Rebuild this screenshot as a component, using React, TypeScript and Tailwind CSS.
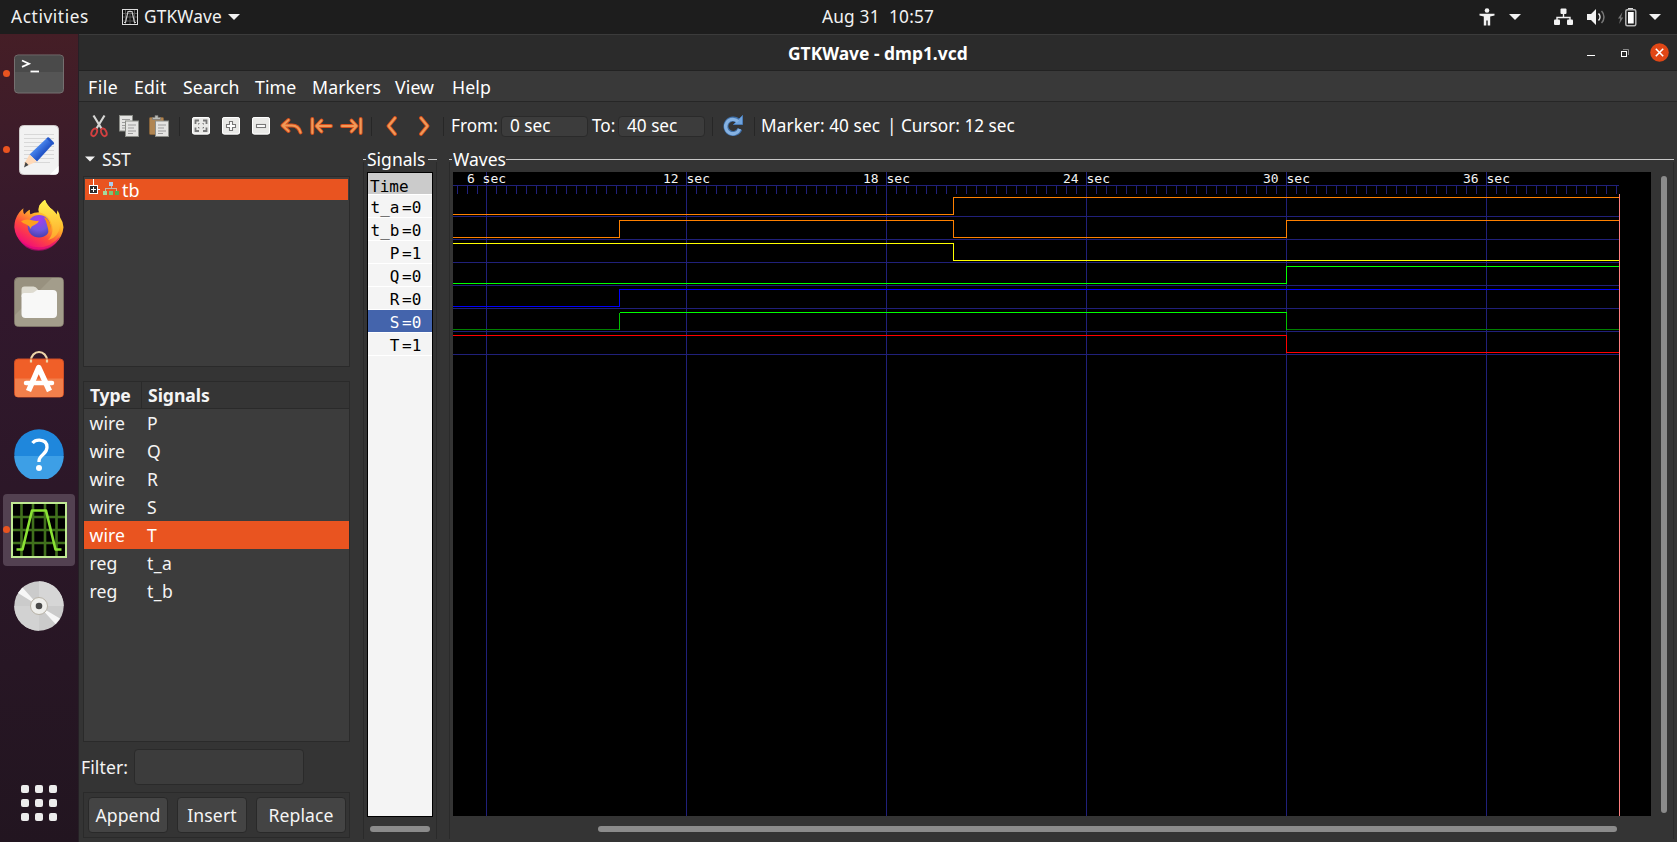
import React from "react";

const ui = "font-['Noto_Sans',sans-serif]";

/* ---------- top bar ---------- */

function Caret({ className = "" }: { className?: string }) {
  return (
    <svg width="12" height="6" viewBox="0 0 12 6" className={className}>
      <path d="M0 0h12L6 6z" fill="#f2f2f2" />
    </svg>
  );
}

function TopBar() {
  return (
    <header className="relative flex h-[34px] shrink-0 items-center bg-[#1d1d1d] text-[17.3px] leading-[34px] text-[#f2f2f2]">
      <div className="w-[122px] pl-[11px] tracking-[0.6px]">Activities</div>
      <svg width="16" height="16" viewBox="0 0 16 16" className="mr-[6px]">
        <rect x=".5" y=".5" width="15" height="15" fill="#111" stroke="#ddd" />
        <path d="M3.500 1v14M8 1v14M12.500 1v14M1 4.500h14M1 8h14M1 12h14" stroke="#555" />
        <path d="M2 13.500h1.500L6 2.500h4l2.500 11H14" fill="none" stroke="#ccc" strokeWidth="1.200" />
      </svg>
      <div className="w-[84px] tracking-[0.15px]">GTKWave</div>
      <Caret />
      <div className="absolute left-[822px] whitespace-pre tracking-[0.18px]">Aug 31  10:57</div>
      <div className="ml-auto flex items-center pr-[16px]">
        <svg width="16" height="18" viewBox="0 0 16 18" className="mr-[14px]" fill="#f2f2f2">
          <circle cx="8" cy="2.500" r="2.300" />
          <path d="M.5 5.800h15v1.700l-4.300 1V17.500H8.700V12.500H7.300v5H4.800V8.500L.5 7.500z" />
        </svg>
        <Caret className="mr-[33px]" />
        <svg width="19" height="18" viewBox="0 0 19 18" className="mr-[14px]">
          <path d="M9.500 5v4.500M3 12.500V9.500h13v3" fill="none" stroke="#f2f2f2" strokeWidth="1.400" />
          <rect x="6.500" y=".5" width="6" height="5.500" rx="1" fill="#f2f2f2" />
          <rect x="0" y="11.500" width="6" height="5.500" rx="1" fill="#f2f2f2" />
          <rect x="13" y="11.500" width="6" height="5.500" rx="1" fill="#f2f2f2" />
        </svg>
        <svg width="19" height="18" viewBox="0 0 19 18" className="mr-[12px]">
          <path d="M0 6h4l5-5v16l-5-5H0z" fill="#f2f2f2" />
          <path d="M11.500 5.500a5 5 0 0 1 0 7" fill="none" stroke="#f2f2f2" strokeWidth="1.500" />
          <path d="M14.500 3a8.500 8.500 0 0 1 0 12" fill="none" stroke="#777" strokeWidth="1.500" />
        </svg>
        <svg width="19" height="20" viewBox="0 0 19 20" className="mr-[12px]">
          <path d="M4.500 5L0 11.500h2.200L1.200 17l4-6.500H3z" fill="#777" />
          <path d="M10 1h5v2h-5z" fill="#ddd" />
          <rect x="7.800" y="2.700" width="10" height="16" rx="1.500" fill="#1d1d1d" stroke="#b5b5b5" strokeWidth="1.500" />
          <rect x="10" y="5" width="5.700" height="11.500" fill="#fff" />
        </svg>
        <Caret />
      </div>
    </header>
  );
}

/* ---------- dock ---------- */

function DockItem({ running, active, children }: { running?: boolean; active?: boolean; children: React.ReactNode }) {
  return (
    <div className="relative flex h-[72px] w-[72px] items-center justify-center">
      {active && <div className="absolute inset-0 rounded-[4px] bg-[#534151]" />}
      {running && <div className="absolute top-[32px] left-0 h-[7px] w-[7px] rounded-full bg-[#e95420]" />}
      <div className="relative">{children}</div>
    </div>
  );
}

function TerminalIcon() {
  return (
    <svg width="50" height="50" viewBox="0 0 50 50">
      <rect x=".5" y="6" width="49" height="38" rx="3.500" fill="#555" stroke="#757070" />
      <path d="M1 23V9.500Q1 6.500 4 6.500H46Q49 6.500 49 9.500V23z" fill="#4a4a4a" />
      <path d="M8 11.500l7 3.200-7 3.200" fill="none" stroke="#fff" strokeWidth="1.800" />
      <path d="M16.500 22.500h8.500" stroke="#fff" strokeWidth="1.800" />
    </svg>
  );
}

function EditorIcon() {
  return (
    <svg width="50" height="50" viewBox="0 0 50 50">
      <defs>
        <linearGradient id="pen" x1="0" y1="0" x2="1" y2="1">
          <stop offset=".35" stopColor="#4a86ee" />
          <stop offset=".6" stopColor="#2456c8" />
        </linearGradient>
      </defs>
      <rect x="5.500" y=".5" width="39" height="49" rx="4" fill="#f2f2f2" stroke="#cfcaca" />
      <path d="M10 9.500h30M10 13.500h30M10 17.500h30M10 21.500h30M10 25.500h30M10 29.500h30M10 33.500h30M10 37.500h26" stroke="#d8d8d8" />
      <path d="M33 13l6 6-16 17.500-7.500-7z" fill="url(#pen)" />
      <path d="M32.500 13.500q1.500-2 3-.5l4 4q1.500 1.500-.5 3z" fill="#2456c8" />
      <path d="M15.500 29.500l7.500 7L12.500 41 10 39z" fill="#ffd9b8" />
      <path d="M11.500 37l3 3L10 42.500z" fill="#444" />
      <path d="M36 49.500l8.500-8.500v5q0 3.500-3.500 3.500z" fill="#fff" />
    </svg>
  );
}

function FirefoxIcon() {
  return (
    <svg width="50" height="52" viewBox="0 0.7 50 52">
      <defs>
        <linearGradient id="fxBody" x1=".85" y1=".1" x2=".3" y2="1">
          <stop offset="0" stopColor="#fff44f" />
          <stop offset=".35" stopColor="#ffb528" />
          <stop offset=".65" stopColor="#ff4a3d" />
          <stop offset="1" stopColor="#f0057f" />
        </linearGradient>
        <radialGradient id="fxGlobe" cx=".5" cy=".2" r=".8">
          <stop offset="0" stopColor="#a63cf0" />
          <stop offset=".6" stopColor="#6f56dd" />
          <stop offset="1" stopColor="#4a3fae" />
        </radialGradient>
        <linearGradient id="fxTail" x1="0" y1="0" x2="0" y2="1">
          <stop offset="0" stopColor="#fff44f" />
          <stop offset="1" stopColor="#ffa52b" />
        </linearGradient>
      </defs>
      <path d="M9.500 9q-1 4 1 6 3-4 5.500-4.500-.5 3 .5 4.500Q20 13 25 13q-2-7 6-12.500 2 6 7.500 10 3 2.500 4 5l1-4.500q2 3 2.500 7 3.500 5 3.500 10A24.700 24.700 0 0 1 .3 28Q.3 20 5 13.500 7 10.500 9.500 9z" fill="url(#fxBody)" />
      <path d="M4 38q8 10 21 10 12 0 21-11-6 14-21 14.500Q11 52 4 38z" fill="#d9067f" opacity=".6" />
      <path d="M25 13q-2-7 6-12.500 2 6 7.500 10Q46 17 46 26q-1 12-12 15 6-6 4-15-2-8-8-11-2-1.500-5-2z" fill="url(#fxTail)" />
      <circle cx="25" cy="27" r="11.300" fill="url(#fxGlobe)" />
      <path d="M7 22q4-2.500 9-1.500 4 1.500 9 1-1 3-4.500 4.200-3.500 1-4 4-.5-3-3.500-4.200Q9 24.500 7 22z" fill="#ffa01e" />
      <path d="M30 18q5 1.500 6.500 8 .5 5-2 8.500 0-5-1.500-9-1-4-3-7.500z" fill="#ff8a16" />
    </svg>
  );
}

function FilesIcon() {
  return (
    <svg width="50" height="50" viewBox="0 0 50 50">
      <rect x=".5" y=".5" width="49" height="49" rx="4" fill="#98917f" stroke="#7d7468" />
      <path d="M38 1h8q3 0 3 3v42q0 3-3 3H4q-3 0-3-3v-8z" fill="#a39d8b" />
      <path d="M7.500 16v-3.500q0-3 3-3h9q2.500 0 4 2.500l1.500 2V20H7.500z" fill="#dedbd0" />
      <path d="M7.500 19q0-3 3-3h6q3 0 4.500-1.500l2-1.500H39q4 0 4 4v20q0 4-4 4H11.500q-4 0-4-4z" fill="#f8f8f7" />
    </svg>
  );
}

function SoftwareIcon() {
  return (
    <svg width="50" height="50" viewBox="0 2.500 50 50" className="overflow-visible">
      <path d="M17 11.500V9a8 8.500 0 0 1 16 0v2.500" fill="none" stroke="#eed5a9" strokeWidth="2.200" transform="translate(0 1)" />
      <rect x=".5" y="8.500" width="49" height="38" rx="3.500" fill="#f05f28" stroke="#cf4f26" />
      <path d="M1 28h48v15.500q0 3-3 3H4q-3 0-3-3z" fill="#f27f4b" />
      <path d="M17 12V9M33 12V9" stroke="#eed5a9" strokeWidth="2.200" />
      <g transform="translate(0 .5)">
        <path d="M14.500 40L24.700 16.500l10.800 23.500" fill="none" stroke="#fff" strokeWidth="5.500" strokeLinejoin="round" />
        <path d="M12 32h26" stroke="#fff" strokeWidth="4.500" strokeLinecap="round" />
      </g>
    </svg>
  );
}

function HelpIcon() {
  return (
    <svg width="50" height="50" viewBox="0 0 50 50">
      <circle cx="25" cy="25" r="24.700" fill="#1f87dc" />
      <path d="M.3 27A24.700 24.700 0 0 0 49.700 27z" fill="#3d9fe6" />
      <path d="M18.500 14q2.500-3 7-2.800 7.500.3 7.500 7 0 3.800-4 7.300-4 3.500-4 6.500v1" fill="none" stroke="#fff" strokeWidth="3.300" />
      <circle cx="25" cy="39" r="3" fill="#fff" />
    </svg>
  );
}

function GtkWaveIcon() {
  return (
    <svg width="56" height="56" viewBox="0 0 56 56">
      <rect x="1" y="1" width="54" height="54" fill="#000" />
      <path d="M10.500 2v52M22 2v52M34 2v52M45.500 2v52M2 15h52M2 28h52M2 41h52" stroke="#40701c" strokeWidth="2.600" />
      <rect x="1" y="1" width="54" height="54" fill="none" stroke="#c0ea94" strokeWidth="2" />
      <path d="M5.500 47.500h6L21 8.500h14l9.500 39h6" fill="none" stroke="#8ae234" strokeWidth="2.600" strokeLinejoin="round" />
    </svg>
  );
}

function DiscIcon() {
  return (
    <svg width="50" height="50" viewBox="0 0 50 50">
      <circle cx="25" cy="25" r="24.700" fill="#cbcbcb" />
      <path d="M25 25V.3A24.700 24.700 0 0 1 49.700 25z" fill="#d6d6d6" />
      <path d="M25 25V49.700A24.700 24.700 0 0 1 .3 25z" fill="#d2d2d2" />
      <path d="M25 25L4 12l4.500-5.500zM25 25l21 12.500-4.500 5.500z" fill="#f7f7f7" />
      <circle cx="25" cy="25" r="8.500" fill="#efefec" stroke="#b8b2a6" />
      <circle cx="25" cy="25" r="3.300" fill="#4a4a4a" />
    </svg>
  );
}

function Dock() {
  return (
    <nav className="flex w-[79px] shrink-0 flex-col gap-[4px] border-r border-[#262026] bg-linear-to-b from-[#451e26] via-[#32182d] via-30% to-[#221520] pt-[4px] pl-[3px]">
      <DockItem running><TerminalIcon /></DockItem>
      <DockItem running><EditorIcon /></DockItem>
      <DockItem><FirefoxIcon /></DockItem>
      <DockItem><FilesIcon /></DockItem>
      <DockItem><SoftwareIcon /></DockItem>
      <DockItem><HelpIcon /></DockItem>
      <DockItem running active><GtkWaveIcon /></DockItem>
      <DockItem><DiscIcon /></DockItem>
      <div className="mt-auto mb-[21px] ml-[18px] grid w-[36px] grid-cols-3 gap-[6px]">
        {Array.from({ length: 9 }, (_, i) => (
          <div key={i} className="h-[8px] w-[8px] rounded-[2px] bg-[#ececec]" />
        ))}
      </div>
    </nav>
  );
}

/* ---------- window chrome ---------- */

function TitleBar() {
  return (
    <div className="relative flex h-[37px] shrink-0 items-center border-t border-b border-t-[#3b3b3b] border-b-[#222] bg-[#2b2b2b]">
      <div className="absolute left-[709px] text-[17.4px] leading-[34px] font-bold whitespace-nowrap text-white">GTKWave - dmp1.vcd</div>
      <div className="ml-auto flex items-center pr-[8px]">
        <svg width="8" height="10" viewBox="0 0 8 10" className="mr-[26px]">
          <path d="M0 7.500h8" stroke="#fff" />
        </svg>
        <svg width="8" height="8" viewBox="0 0 8 8" className="mr-[21px]">
          <path d="M2 .5h5.500V6" fill="none" stroke="#8a8a8a" />
          <rect x=".5" y="2.500" width="5" height="5" fill="none" stroke="#fff" />
        </svg>
        <svg width="19" height="19" viewBox="0 0 19 19">
          <circle cx="9.500" cy="9.500" r="9.300" fill="#e04716" />
          <path d="M5.800 5.800l7.400 7.400M13.200 5.800l-7.400 7.400" stroke="#fff" strokeWidth="1.600" />
        </svg>
      </div>
    </div>
  );
}

function MenuBar() {
  return (
    <div className="grid h-[31px] shrink-0 grid-cols-[46px_49px_72px_57px_83px_57px_60px] border-b border-[#262626] bg-[#393939] pt-[2px] pl-[9px] text-[17.7px] leading-[28px] text-white">
      {["File", "Edit", "Search", "Time", "Markers", "View", "Help"].map((m) => (
        <div key={m} className={m === "File" ? "tracking-[0.5px]" : m === "Edit" ? "tracking-[0.2px]" : "tracking-[0.1px]"}>
          {m}
        </div>
      ))}
    </div>
  );
}

function Cell({ children, className = "" }: { children: React.ReactNode; className?: string }) {
  return <div className={`flex w-[30px] shrink-0 items-center justify-center ${className}`}>{children}</div>;
}

function Sep({ className }: { className: string }) {
  return <div className={`h-[19px] w-px shrink-0 bg-[#262626] ${className}`} />;
}

function WhiteTile({ children }: { children: React.ReactNode }) {
  return (
    <svg width="20" height="20" viewBox="0 0 20 20">
      <rect x="1" y="2" width="18" height="17.500" rx="3" fill="#1d1d1d" opacity=".5" />
      <rect x="1" y="1" width="18" height="17.500" rx="2.500" fill="#e9e9e7" />
      <rect x="1.500" y="1.500" width="17" height="16.500" rx="2" fill="none" stroke="#fff" />
      {children}
    </svg>
  );
}

function Page({ x, y }: { x: number; y: number }) {
  return (
    <g transform={`translate(${x} ${y})`}>
      <rect x=".5" y=".5" width="13" height="15.500" fill="#e4e4e2" stroke="#8b8d88" />
      <path d="M3 4.500h8M3 7.500h6M3 10.500h8M3 13h5" stroke="#9c9c9c" />
    </g>
  );
}

function OrangeArrow({ d, flip }: { d: string; flip?: boolean }) {
  return (
    <svg width="23" height="20" viewBox="0 0 23 20" className={flip ? "-scale-x-100" : ""}>
      <path d={d} fill="none" stroke="#d9501c" strokeWidth="3.800" strokeLinejoin="round" strokeLinecap="round" />
      <path d={d} fill="none" stroke="#f09a58" strokeWidth="2" strokeLinejoin="round" strokeLinecap="round" />
    </svg>
  );
}

const LINE_ARROW = "M2.300 3v14M21 10H7M11.500 4.500L6.500 10l5 5.500";

function Entry({ value, className }: { value: string; className: string }) {
  return (
    <div className={`h-[21px] shrink-0 rounded-[4px] border border-[#2a2a2a] bg-[#3c3c3c] pl-[8px] leading-[18px] ${className}`}>{value}</div>
  );
}

function ToolBar() {
  return (
    <div className="flex h-[48px] shrink-0 items-center pl-[5px] text-[17.2px] leading-[20px] whitespace-nowrap text-white">
      <Cell>
        <svg width="18" height="24" viewBox="0 0 18 24">
          <path d="M3.500 1.500l8 13M14.500 1.500l-8 13" stroke="#d6d6d4" strokeWidth="2.200" />
          <ellipse cx="4.200" cy="18.300" rx="2.500" ry="4" transform="rotate(25 4.200 18.300)" fill="none" stroke="#d24040" strokeWidth="1.900" />
          <ellipse cx="13.800" cy="18.300" rx="2.500" ry="4" transform="rotate(-25 13.800 18.300)" fill="none" stroke="#d24040" strokeWidth="1.900" />
        </svg>
      </Cell>
      <Cell>
        <svg width="21" height="23" viewBox="0 0 21 23"><Page x={0} y={0} /><Page x={6} y={5.5} /></svg>
      </Cell>
      <Cell>
        <svg width="21" height="23" viewBox="0 0 21 23">
          <rect x=".5" y="2.500" width="14" height="17" rx="1" fill="#b08552" stroke="#86633a" />
          <path d="M3.500 4.500V2.500h2.500V.5h3v2h2.500v2z" fill="#b9bbb6" stroke="#777" strokeWidth=".7" />
          <Page x={6} y={5.5} />
        </svg>
      </Cell>
      <Sep className="ml-[5px] mr-[6px]" />
      <Cell>
        <WhiteTile>
          <path d="M4.500 8V4.500H8M12 4.500h3.500V8M15.500 11.500V15H12M8 15H4.500v-3.500" fill="none" stroke="#777" strokeWidth="1.800" />
          <path d="M7.500 8.500v-1h1M11.500 7.500h1v1M12.500 11v1h-1M8.500 12h-1v-1" fill="none" stroke="#777" />
        </WhiteTile>
      </Cell>
      <Cell>
        <WhiteTile>
          <path d="M8.500 5.500h3v3h3v3h-3v3h-3v-3h-3v-3h3z" fill="#fff" stroke="#777" strokeWidth="1.100" />
        </WhiteTile>
      </Cell>
      <Cell>
        <WhiteTile>
          <rect x="5.500" y="8.500" width="9" height="3" fill="#fff" stroke="#777" strokeWidth="1.100" />
        </WhiteTile>
      </Cell>
      <Cell><OrangeArrow d="M8.500 4L2.500 9.500l6 5.500M3.500 9.500H12q6.500 0 8.500 7" /></Cell>
      <Cell><OrangeArrow d={LINE_ARROW} /></Cell>
      <Cell><OrangeArrow d={LINE_ARROW} flip /></Cell>
      <Sep className="mr-[4px] ml-[5px]" />
      <Cell><OrangeArrow d="M15 2L8.500 10l6.500 8" /></Cell>
      <Cell className="ml-[3px]"><OrangeArrow d="M15 2L8.500 10l6.500 8" flip /></Cell>
      <Sep className="ml-[4px] mr-[7px]" />
      <div className="w-[50px] shrink-0">From:</div>
      <Entry value="0 sec" className="w-[87px]" />
      <div className="w-[30px] shrink-0 pl-[4px]">To:</div>
      <Entry value="40 sec" className="w-[87px]" />
      <Sep className="ml-[7px] mr-[10px]" />
      <svg width="21" height="22" viewBox="0 0 21 22" className="shrink-0">
        <path d="M15.500 6.500A7.200 7.200 0 1 0 16.800 14" fill="none" stroke="#3f6fa8" strokeWidth="5" />
        <path d="M10.500 9.500h9V.5z" fill="#6fa3dc" stroke="#4b7db8" />
        <path d="M15 6.500A7.200 7.200 0 1 0 16.600 14" fill="none" stroke="#86b2e2" strokeWidth="3.300" />
      </svg>
      <Sep className="ml-[10px] mr-[6px]" />
      <div className="w-[126px] shrink-0 tracking-[0.1px]">Marker: 40 sec</div>
      <div className="w-[14px] shrink-0">|</div>
      <div>Cursor: 12 sec</div>
    </div>
  );
}

/* ---------- left pane ---------- */

const NETS = [
  ["wire", "P"],
  ["wire", "Q"],
  ["wire", "R"],
  ["wire", "S"],
  ["wire", "T"],
  ["reg", "t_a"],
  ["reg", "t_b"],
];

function Button({ label, className }: { label: string; className: string }) {
  return (
    <div className={`flex h-[36px] items-center justify-center rounded-[4px] border border-[#292929] bg-[#444] tracking-[0.1px] ${className}`}>{label}</div>
  );
}

function LeftPane() {
  return (
    <aside className="flex w-[284px] shrink-0 flex-col pl-[3px] text-[17.6px] text-[#f4f4f4]">
      <div className="mb-[7px] flex h-[20px] items-center pl-[3px]">
        <Caret className="mr-[7px] w-[10px]" />
        <span className="tracking-[-0.1px] leading-[20px]">SST</span>
      </div>
      <div className="ml-px h-[191px] w-[267px] border border-[#2a2a2a] bg-[#3c3c3c] px-px pt-[2px]">
        <div className="flex h-[21px] items-center bg-[#e95420] text-white">
          <svg width="36" height="21" viewBox="0 0 36 21" shapeRendering="crispEdges">
            <path d="M8.500 -1v8M13 10.500h2" stroke="#fff" />
            <rect x="4.500" y="6.500" width="8" height="8" fill="#2c2c2c" stroke="#fff" />
            <path d="M6 10.500h5M8.500 8v5" stroke="#fff" />
            <rect x="24" y="3" width="4" height="4" fill="#a9cdf0" />
            <path d="M26.500 7v2M20.500 12V9.500h11V12" fill="none" stroke="#c9b6a5" />
            <rect x="18" y="12" width="4" height="4" fill="#a5d99b" />
            <rect x="24" y="12" width="4" height="4" fill="#7cc576" />
            <rect x="30" y="12" width="4" height="4" fill="#4fae52" />
          </svg>
          <span className="pt-[2px] pl-px text-[18px] leading-[21px]">tb</span>
        </div>
      </div>
      <div className="mt-[14px] ml-px h-[361px] w-[267px] border border-[#2a2a2a] bg-[#3c3c3c]">
        <div className="flex h-[27px] border-b border-[#2a2a2a] bg-[#353535] leading-[27px] font-bold">
          <div className="w-[58px] border-r border-[#2a2a2a] pl-[6px] tracking-[-0.2px]">Type</div>
          <div className="pl-[6px] tracking-[-0.05px]">Signals</div>
        </div>
        {NETS.map(([type, name]) => (
          <div key={name} className={`flex h-[28px] leading-[29px] ${name === "T" ? "bg-[#e95420] text-white" : ""}`}>
            <div className="w-[63px] pl-[5.500px] tracking-[0.1px]">{type}</div>
            <div className={name.length > 1 ? "tracking-[0.4px]" : ""}>{name}</div>
          </div>
        ))}
      </div>
      <div className="mt-[7px] flex h-[36px] items-center">
        <div className="-ml-px w-[53px] tracking-[0.1px]">Filter:</div>
        <div className="h-[36px] w-[170px] rounded-[4px] border border-[#2a2a2a] bg-[#3c3c3c]" />
      </div>
      <div className="mt-[7px] ml-px flex h-[46px] w-[267px] border border-[#2a2a2a] pt-[4px] pl-[4px]">
        <Button label="Append" className="w-[80px]" />
        <Button label="Insert" className="ml-[9px] w-[70px]" />
        <Button label="Replace" className="ml-[9px] w-[90px]" />
      </div>
    </aside>
  );
}

/* ---------- signals pane ---------- */

const TRACES = [
  { name: "t_a", value: "0" },
  { name: "t_b", value: "0" },
  { name: "P", value: "1" },
  { name: "Q", value: "0" },
  { name: "R", value: "0" },
  { name: "S", value: "0" },
  { name: "T", value: "1" },
];

function FrameTitle({ label, className }: { label: string; className: string }) {
  return (
    <div className="flex h-[20px] items-center text-[17.5px] leading-[20px] text-white">
      <div className="h-px w-[3px] bg-[#c8c8c8]" />
      <span className={`pl-px ${className}`}>{label}</span>
      <div className="h-px flex-1 bg-[#c8c8c8]" />
    </div>
  );
}

function SignalsPane() {
  return (
    <section className="w-[74px] shrink-0">
      <FrameTitle label="Signals" className="w-[62px]" />
      <div className="-mt-[7px] flex h-[677px] flex-col border-x border-[#2a2a2a] pt-[10px] pl-[3px]">
        <div className="h-[645px] w-[66px] border border-black bg-[#f4f4f4] font-['DejaVu_Sans_Mono',monospace] text-[16px] text-black">
          <div className="h-[21px] bg-[#cbcbcb] pl-[2px] leading-[28px]">Time</div>
          {TRACES.map((t) => (
            <div key={t.name} className={`flex h-[23px] border-t border-white pl-[2px] leading-[25px] ${t.name === "S" ? "bg-[#4464ac] text-white" : ""}`}>
              <div className="w-[32px] pr-[2.500px] text-right">{t.name}</div>
              <div>={t.value}</div>
            </div>
          ))}
          <div className="h-px bg-white" />
        </div>
        <div className="mt-[9px] ml-[3px] h-[6px] w-[60px] rounded-full bg-[#8b8b8b]" />
      </div>
    </section>
  );
}

/* ---------- waves pane ---------- */

const GRID = "#20207a";
const END_X = 1166;
const MAJORS = [33, 233, 433, 633, 833, 1033];

type Seg = { d: string; c: string };

function row(i: number) {
  return { hi: 25.5 + 23 * i, lo: 42.5 + 23 * i };
}

function segments(): Seg[] {
  const T10 = 166.5;
  const T20 = 500.5;
  const T30 = 833.5;
  const r = [0, 1, 2, 3, 4, 5, 6].map(row);
  return [
    { d: `M0 ${r[0].lo}H${T20}V${r[0].hi}H${END_X}`, c: "#ff8000" },
    { d: `M0 ${r[1].lo}H${T10}V${r[1].hi}H${T20}V${r[1].lo}H${T30}V${r[1].hi}H${END_X}`, c: "#ff8000" },
    { d: `M0 ${r[2].hi}H${T20}V${r[2].lo}H${END_X}`, c: "#ffff00" },
    { d: `M0 ${r[3].lo}H${T30}V${r[3].hi}H${END_X}`, c: "#00ff00" },
    { d: `M0 ${r[4].lo}H${T10}V${r[4].hi}H${END_X}`, c: "#0000ff" },
    { d: `M0 ${r[5].lo}H${T10}M${T30} ${r[5].lo}H${END_X}`, c: "#008000" },
    { d: `M${T10} ${r[5].lo}V${r[5].hi}M${T30} ${r[5].hi}V${r[5].lo}`, c: "#00c000" },
    { d: `M${T10} ${r[5].hi}H${T30}`, c: "#00ff00" },
    { d: `M0 ${r[6].hi}H${T30}V${r[6].lo}H${END_X}`, c: "#ff0000" },
  ];
}

function WaveCanvas() {
  const ticks: number[] = [4, 14, 24];
  for (let x = 43; x < END_X; x += 10) ticks.push(x);
  return (
    <svg width="1198" height="644" viewBox="0 0 1198 644" className="block bg-black">
      <g stroke={GRID} shapeRendering="crispEdges">
        <path d={`M0 13.500H${END_X}`} />
        {ticks.map((x) => (
          <path key={x} d={`M${x + 0.5} 14V22`} />
        ))}
        {MAJORS.map((x) => (
          <path key={x} d={`M${x + 0.5} 0V644`} />
        ))}
        {[0, 1, 2, 3, 4, 5, 6].map((i) => (
          <path key={i} d={`M0 ${44.5 + 23 * i}H${END_X}`} />
        ))}
      </g>
      <g fill="none" shapeRendering="crispEdges">
        {segments().map((s) => (
          <path key={s.d} d={s.d} stroke={s.c} />
        ))}
        <path d="M1166.500 22V644" stroke="#ff8080" />
      </g>
      <g className="font-['DejaVu_Sans_Mono',monospace] text-[13px]" fill="#f4f4f4" textAnchor="middle">
        {MAJORS.map((x, i) => (
          <text key={x} x={x + 0.5} y="11">{`${6 * (i + 1)} sec`}</text>
        ))}
      </g>
    </svg>
  );
}

function WavesPane() {
  return (
    <section className="ml-[12px] w-[1225px] shrink-0">
      <FrameTitle label="Waves" className="w-[54px]" />
      <div className="-mt-[7px] h-[677px] border-x border-[#2a2a2a] pt-[10px] pl-[3px]">
        <div className="flex">
          <WaveCanvas />
          <div className="mt-[4px] ml-[10px] h-[637px] w-[6px] rounded-full bg-[#8b8b8b]" />
        </div>
        <div className="mt-[10px] ml-[145px] h-[6px] w-[1019px] rounded-full bg-[#8b8b8b]" />
      </div>
    </section>
  );
}

export default function App() {
  return (
    <div className={`flex h-[842px] w-[1677px] flex-col overflow-hidden bg-[#343434] ${ui}`}>
      <TopBar />
      <div className="flex min-h-0 flex-1">
        <Dock />
        <main className="flex min-w-0 flex-1 flex-col bg-[#343434]">
          <TitleBar />
          <MenuBar />
          <ToolBar />
          <div className="-mt-px flex min-h-0 flex-1">
            <LeftPane />
            <SignalsPane />
            <WavesPane />
          </div>
        </main>
      </div>
    </div>
  );
}
